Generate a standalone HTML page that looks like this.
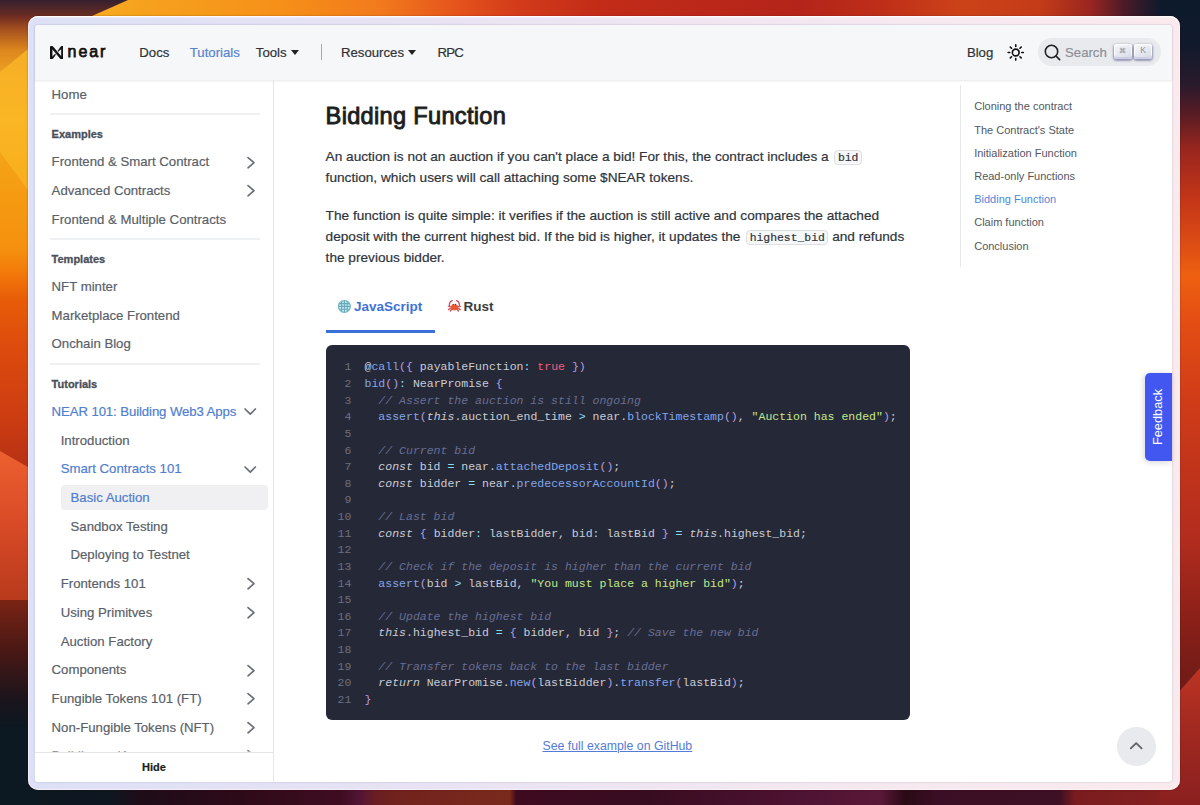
<!DOCTYPE html>
<html><head><meta charset="utf-8"><style>
html,body{margin:0;padding:0;width:1200px;height:805px;overflow:hidden;position:relative;background:#1a1a2a}
.t{position:absolute;white-space:pre;font-family:"Liberation Sans",sans-serif}
.sw{-webkit-text-stroke:0.2px currentColor}
code.ic{font-family:"Liberation Mono",monospace;font-size:11.4px;background:#f6f7f8;border:1px solid #dfe0e5;border-radius:4px;padding:1px 2.5px 0px;margin-left:2px;color:#2f343b;line-height:0}
</style></head><body>
<svg style="position:absolute;left:0;top:0" width="1200" height="805"><defs><linearGradient id="gt" gradientUnits="userSpaceOnUse" x1="0" y1="0" x2="1200" y2="0"><stop offset="0.0000" stop-color="#f6a21e"/><stop offset="0.0833" stop-color="#f8aa22"/><stop offset="0.1167" stop-color="#f6a21e"/><stop offset="0.2333" stop-color="#f69018"/><stop offset="0.3167" stop-color="#f27a1c"/><stop offset="0.3833" stop-color="#e4521c"/><stop offset="0.4333" stop-color="#d23a1a"/><stop offset="0.5000" stop-color="#c22c18"/><stop offset="0.6667" stop-color="#b4241a"/><stop offset="0.7333" stop-color="#be2e18"/><stop offset="0.8000" stop-color="#cc4218"/><stop offset="0.8667" stop-color="#c43c18"/><stop offset="0.9083" stop-color="#9a2620"/><stop offset="0.9375" stop-color="#4a1a28"/><stop offset="0.9667" stop-color="#0e1a2c"/><stop offset="1.0000" stop-color="#0c1a2c"/></linearGradient><linearGradient id="gl" gradientUnits="userSpaceOnUse" x1="0" y1="0" x2="0" y2="805"><stop offset="0.0000" stop-color="#3a2232"/><stop offset="0.0199" stop-color="#6e2c22"/><stop offset="0.0373" stop-color="#a8521e"/><stop offset="0.0621" stop-color="#dc861e"/><stop offset="0.0894" stop-color="#eca020"/><stop offset="0.1863" stop-color="#f3a418"/><stop offset="0.2360" stop-color="#f59c12"/><stop offset="0.3106" stop-color="#f5900e"/><stop offset="0.3379" stop-color="#f27a0a"/><stop offset="0.3727" stop-color="#e85c08"/><stop offset="0.4348" stop-color="#dc4a0e"/><stop offset="0.5217" stop-color="#cc3c12"/><stop offset="0.5839" stop-color="#b43014"/><stop offset="0.6708" stop-color="#a02a14"/><stop offset="0.7453" stop-color="#7a2414"/><stop offset="0.8075" stop-color="#4a1814"/><stop offset="0.8696" stop-color="#1a141c"/><stop offset="0.9068" stop-color="#0c1822"/><stop offset="1.0000" stop-color="#0c1822"/></linearGradient><linearGradient id="gr" gradientUnits="userSpaceOnUse" x1="0" y1="0" x2="0" y2="805"><stop offset="0.0000" stop-color="#0e1a2c"/><stop offset="0.0559" stop-color="#101a2c"/><stop offset="0.1056" stop-color="#2a1a2c"/><stop offset="0.1429" stop-color="#5a1c24"/><stop offset="0.1863" stop-color="#9a261e"/><stop offset="0.2484" stop-color="#c43618"/><stop offset="0.3106" stop-color="#e05014"/><stop offset="0.3416" stop-color="#ee6010"/><stop offset="0.3975" stop-color="#e44e14"/><stop offset="0.4969" stop-color="#d03c18"/><stop offset="0.6708" stop-color="#b22c1e"/><stop offset="0.7702" stop-color="#8a2018"/><stop offset="0.8696" stop-color="#6a1a18"/><stop offset="1.0000" stop-color="#6a1a18"/></linearGradient><linearGradient id="gb" gradientUnits="userSpaceOnUse" x1="0" y1="0" x2="1200" y2="0"><stop offset="0.0000" stop-color="#0c1820"/><stop offset="0.0917" stop-color="#0e1620"/><stop offset="0.1167" stop-color="#1e0c18"/><stop offset="0.2000" stop-color="#2e0a18"/><stop offset="0.2833" stop-color="#3e0c20"/><stop offset="0.3000" stop-color="#521436"/><stop offset="0.3125" stop-color="#6a1e22"/><stop offset="0.3333" stop-color="#72221c"/><stop offset="0.4250" stop-color="#7a2a1c"/><stop offset="0.4300" stop-color="#3e0a20"/><stop offset="0.5417" stop-color="#380c20"/><stop offset="0.6667" stop-color="#4e1232"/><stop offset="0.7333" stop-color="#5a1838"/><stop offset="0.7542" stop-color="#2a0a14"/><stop offset="0.7792" stop-color="#3a0e24"/><stop offset="0.8833" stop-color="#3e1024"/><stop offset="0.8958" stop-color="#7a1c1e"/><stop offset="1.0000" stop-color="#8a2020"/></linearGradient><linearGradient id="gd" x1="0" y1="0" x2="0" y2="1"><stop offset="0" stop-color="#35202e"/><stop offset="1" stop-color="#6e2c22"/></linearGradient></defs><rect x="0" y="0" width="1200" height="17" fill="url(#gt)"/><polygon points="0,0 128,0 92,16 88,17 0,17" fill="url(#gd)"/><rect x="0" y="16" width="40" height="789" fill="url(#gl)"/><rect x="1160" y="16" width="40" height="789" fill="url(#gr)"/><rect x="40" y="775" width="1120" height="30" fill="url(#gb)"/><linearGradient id="gar" x1="0" y1="0" x2="0" y2="1"><stop offset="0" stop-color="#f6ae26"/><stop offset="0.5" stop-color="#fab624"/><stop offset="1" stop-color="#f8ac1c"/></linearGradient><polygon points="0,72 27,50 40,44 40,196 27,189 0,152" fill="url(#gar)"/><linearGradient id="gw1" x1="0" y1="0" x2="0" y2="1"><stop offset="0" stop-color="#ec6030"/><stop offset="0.5" stop-color="#d84a26"/><stop offset="1" stop-color="#b83a1c"/></linearGradient><polygon points="0,451 40,474 40,600 0,600" fill="url(#gw1)"/><linearGradient id="gw2" x1="0" y1="0" x2="0" y2="1"><stop offset="0" stop-color="#bc3424"/><stop offset="0.4" stop-color="#a42a20"/><stop offset="1" stop-color="#8a2020"/></linearGradient><polygon points="1160,713 1200,668 1200,805 1160,805" fill="url(#gw2)"/></svg>
<div style="position:absolute;left:27.5px;top:16px;width:1152.5px;height:774px;border-radius:10px;background:linear-gradient(90deg,#dde0f6 0%,#e6e2f4 30%,#f4e8f0 70%,#faeaee 100%);box-shadow:0 0 1.5px rgba(60,10,0,.6), inset 0 1.5px 0 rgba(255,250,252,.9), inset 0 0 0 1px rgba(255,245,248,.6)"></div>
<div style="position:absolute;left:35px;top:25px;width:1137px;height:757px;border-radius:3px;background:#ffffff;box-shadow:0 0 1.5px rgba(40,40,80,.35)"></div>
<div style="position:absolute;left:35px;top:25px;width:1137px;height:55px;background:#f6f7f9;box-shadow:0 1px 2.5px rgba(20,20,40,.10);border-radius:3px 3px 0 0"></div>
<svg style="position:absolute;left:49.8px;top:45.6px" width="13.5" height="13.5" viewBox="0 0 90 90"><path fill="#111" stroke="#111" stroke-width="4" d="M72.2,4.6L53.4,32.5c-1.3,1.9,1.2,4.2,3,2.6L74.9,19c0.5-0.4,1.2-0.1,1.2,0.6v50.3c0,0.7-0.9,1-1.3,0.5l-56-67C17,1.2,14.4,0,11.7,0H9.7C4.3,0,0,4.3,0,9.7v70.6C0,85.7,4.3,90,9.7,90c3.4,0,6.5-1.7,8.3-4.6l18.8-27.9c1.3-1.9-1.2-4.2-3-2.6L15.3,71c-0.5,0.4-1.2,0.1-1.2-0.6V20.1c0-0.7,0.9-1,1.3-0.5l56,67c1.8,2.2,4.5,3.4,7.3,3.4h2c5.4,0,9.7-4.3,9.7-9.7V9.7c0-5.4-4.3-9.7-9.7-9.7C77.1,0,74,1.7,72.2,4.6z"/></svg>
<div class="t sw" style="left:67.60px;top:40.51px;font-size:16.0px;line-height:21px;color:#111;font-weight:400;font-family:'Liberation Sans';letter-spacing:1.9px;-webkit-text-stroke:0.75px #111">near</div>
<div class="t sw" style="left:139.30px;top:43.54px;font-size:13.2px;line-height:17px;color:#2f3338;font-weight:400;font-family:'Liberation Sans';">Docs</div>
<div class="t sw" style="left:189.80px;top:43.54px;font-size:13.2px;line-height:17px;color:#5585cf;font-weight:400;font-family:'Liberation Sans';">Tutorials</div>
<div class="t sw" style="left:255.80px;top:43.54px;font-size:13.2px;line-height:17px;color:#2f3338;font-weight:400;font-family:'Liberation Sans';">Tools</div>
<div style="position:absolute;left:291px;top:50.3px;width:0;height:0;border-left:4.7px solid transparent;border-right:4.7px solid transparent;border-top:5px solid #222"></div>
<div style="position:absolute;left:320.5px;top:44px;width:1.6px;height:16px;background:#a4a7ac"></div>
<div class="t sw" style="left:341.00px;top:43.54px;font-size:13.2px;line-height:17px;color:#2f3338;font-weight:400;font-family:'Liberation Sans';">Resources</div>
<div style="position:absolute;left:408px;top:50.3px;width:0;height:0;border-left:4.7px solid transparent;border-right:4.7px solid transparent;border-top:5px solid #222"></div>
<div class="t sw" style="left:437.50px;top:43.54px;font-size:13.2px;line-height:17px;color:#2f3338;font-weight:400;font-family:'Liberation Sans';letter-spacing:-0.8px;">RPC</div>
<div class="t sw" style="left:966.90px;top:43.54px;font-size:13.2px;line-height:17px;color:#2f3338;font-weight:400;font-family:'Liberation Sans';">Blog</div>
<svg style="position:absolute;left:1005px;top:42px" width="22" height="22" viewBox="0 0 22 22"><g transform="translate(10.75 10.5)" stroke="#111" stroke-width="1.6" stroke-linecap="round" fill="none"><circle r="3.4"/><path d="M0 -6 V-7.6 M0 6 V7.6 M-6 0 H-7.6 M6 0 H7.6 M4.24 -4.24 L5.4 -5.4 M-4.24 4.24 L-5.4 5.4 M4.24 4.24 L5.4 5.4 M-4.24 -4.24 L-5.4 -5.4"/></g></svg>
<div style="position:absolute;left:1038px;top:38.3px;width:123px;height:27.5px;border-radius:14px;background:#e9eaee"></div>
<svg style="position:absolute;left:1042px;top:43px" width="20" height="20" viewBox="0 0 20 20"><circle cx="9.5" cy="8.5" r="6.2" stroke="#222" stroke-width="1.6" fill="none"/><path d="M14 13 L17.6 16.6" stroke="#222" stroke-width="1.7" stroke-linecap="round"/></svg>
<div class="t sw" style="left:1065.00px;top:43.54px;font-size:13.2px;line-height:17px;color:#8c9099;font-weight:400;font-family:'Liberation Sans';">Search</div>
<div style="position:absolute;left:1114.4px;top:44.1px;width:17.2px;height:15px;box-sizing:border-box;border-radius:3px;background:linear-gradient(-26.5deg,#d5dae4,#f8f8fa);box-shadow:inset 0 -2px 0 0 #cdcde6,inset 0 0 1px 1px #fff,0 1px 2px 1px rgba(30,35,90,.4)"></div>
<div class="t" style="left:1114.4px;top:44.3px;width:17.2px;text-align:center;font-size:7px;line-height:13px;color:#8a8d95">⌘</div>
<div style="position:absolute;left:1134.4px;top:44.1px;width:17.2px;height:15px;box-sizing:border-box;border-radius:3px;background:linear-gradient(-26.5deg,#d5dae4,#f8f8fa);box-shadow:inset 0 -2px 0 0 #cdcde6,inset 0 0 1px 1px #fff,0 1px 2px 1px rgba(30,35,90,.4)"></div>
<div class="t" style="left:1134.4px;top:44.3px;width:17.2px;text-align:center;font-size:8.5px;line-height:13px;color:#8a8d95">K</div>
<div style="position:absolute;left:273.3px;top:80px;width:1.2px;height:702px;background:#e4e5e9"></div>
<div class="t sw" style="left:51.60px;top:85.94px;font-size:13.2px;line-height:17px;color:#5a5f69;font-weight:400;font-family:'Liberation Sans';">Home</div>
<div style="position:absolute;left:49.6px;top:112.6px;width:210.4px;height:2px;background:#eff0f3"></div>
<div class="t" style="left:51.60px;top:127.16px;font-size:11px;line-height:14px;color:#4a4f59;font-weight:700;font-family:'Liberation Sans';-webkit-text-stroke:0.3px #4a4f59">Examples</div>
<div style="position:absolute;left:49.6px;top:237.6px;width:210.4px;height:2px;background:#eff0f3"></div>
<div class="t" style="left:51.60px;top:252.06px;font-size:11px;line-height:14px;color:#4a4f59;font-weight:700;font-family:'Liberation Sans';-webkit-text-stroke:0.3px #4a4f59">Templates</div>
<div style="position:absolute;left:49.6px;top:362.6px;width:210.4px;height:2px;background:#eff0f3"></div>
<div class="t" style="left:51.60px;top:376.86px;font-size:11px;line-height:14px;color:#4a4f59;font-weight:700;font-family:'Liberation Sans';-webkit-text-stroke:0.3px #4a4f59">Tutorials</div>
<div style="position:absolute;left:60.7px;top:485.3px;width:207px;height:24.7px;background:#f0f0f2;border-radius:4px"></div>
<div class="t sw" style="left:51.60px;top:153.24px;font-size:13.2px;line-height:17px;color:#5a5f69;font-weight:400;font-family:'Liberation Sans';">Frontend &amp; Smart Contract</div>
<svg style="position:absolute;left:243px;top:155.5px" width="16" height="16" viewBox="0 0 16 16"><path d="M5 1.6 L11 6.6 L5 11.8" fill="none" stroke="#686d75" stroke-width="1.65" stroke-linecap="round" stroke-linejoin="round"/></svg>
<div class="t sw" style="left:51.60px;top:181.94px;font-size:13.2px;line-height:17px;color:#5a5f69;font-weight:400;font-family:'Liberation Sans';">Advanced Contracts</div>
<svg style="position:absolute;left:243px;top:184.2px" width="16" height="16" viewBox="0 0 16 16"><path d="M5 1.6 L11 6.6 L5 11.8" fill="none" stroke="#686d75" stroke-width="1.65" stroke-linecap="round" stroke-linejoin="round"/></svg>
<div class="t sw" style="left:51.60px;top:210.64px;font-size:13.2px;line-height:17px;color:#5a5f69;font-weight:400;font-family:'Liberation Sans';">Frontend &amp; Multiple Contracts</div>
<div class="t sw" style="left:51.60px;top:278.04px;font-size:13.2px;line-height:17px;color:#5a5f69;font-weight:400;font-family:'Liberation Sans';">NFT minter</div>
<div class="t sw" style="left:51.60px;top:306.74px;font-size:13.2px;line-height:17px;color:#5a5f69;font-weight:400;font-family:'Liberation Sans';">Marketplace Frontend</div>
<div class="t sw" style="left:51.60px;top:335.44px;font-size:13.2px;line-height:17px;color:#5a5f69;font-weight:400;font-family:'Liberation Sans';">Onchain Blog</div>
<div class="t sw" style="left:51.60px;top:402.94px;font-size:13.2px;line-height:17px;color:#4f7ed0;font-weight:400;font-family:'Liberation Sans';letter-spacing:-0.1px;">NEAR 101: Building Web3 Apps</div>
<svg style="position:absolute;left:242px;top:405.2px" width="16" height="16" viewBox="0 0 16 16"><path d="M3 4 L8.3 9.2 L13.4 4" fill="none" stroke="#686d75" stroke-width="1.65" stroke-linecap="round" stroke-linejoin="round"/></svg>
<div class="t sw" style="left:60.70px;top:431.64px;font-size:13.2px;line-height:17px;color:#5a5f69;font-weight:400;font-family:'Liberation Sans';">Introduction</div>
<div class="t sw" style="left:60.70px;top:460.34px;font-size:13.2px;line-height:17px;color:#4f7ed0;font-weight:400;font-family:'Liberation Sans';">Smart Contracts 101</div>
<svg style="position:absolute;left:242px;top:462.6px" width="16" height="16" viewBox="0 0 16 16"><path d="M3 4 L8.3 9.2 L13.4 4" fill="none" stroke="#686d75" stroke-width="1.65" stroke-linecap="round" stroke-linejoin="round"/></svg>
<div class="t sw" style="left:70.50px;top:489.04px;font-size:13.2px;line-height:17px;color:#4f7ed0;font-weight:400;font-family:'Liberation Sans';">Basic Auction</div>
<div class="t sw" style="left:70.50px;top:517.74px;font-size:13.2px;line-height:17px;color:#5a5f69;font-weight:400;font-family:'Liberation Sans';">Sandbox Testing</div>
<div class="t sw" style="left:70.50px;top:546.44px;font-size:13.2px;line-height:17px;color:#5a5f69;font-weight:400;font-family:'Liberation Sans';">Deploying to Testnet</div>
<div class="t sw" style="left:60.70px;top:575.14px;font-size:13.2px;line-height:17px;color:#5a5f69;font-weight:400;font-family:'Liberation Sans';">Frontends 101</div>
<svg style="position:absolute;left:243px;top:577.4px" width="16" height="16" viewBox="0 0 16 16"><path d="M5 1.6 L11 6.6 L5 11.8" fill="none" stroke="#686d75" stroke-width="1.65" stroke-linecap="round" stroke-linejoin="round"/></svg>
<div class="t sw" style="left:60.70px;top:603.84px;font-size:13.2px;line-height:17px;color:#5a5f69;font-weight:400;font-family:'Liberation Sans';">Using Primitves</div>
<svg style="position:absolute;left:243px;top:606.1px" width="16" height="16" viewBox="0 0 16 16"><path d="M5 1.6 L11 6.6 L5 11.8" fill="none" stroke="#686d75" stroke-width="1.65" stroke-linecap="round" stroke-linejoin="round"/></svg>
<div class="t sw" style="left:60.70px;top:632.54px;font-size:13.2px;line-height:17px;color:#5a5f69;font-weight:400;font-family:'Liberation Sans';">Auction Factory</div>
<div class="t sw" style="left:51.60px;top:661.24px;font-size:13.2px;line-height:17px;color:#5a5f69;font-weight:400;font-family:'Liberation Sans';">Components</div>
<svg style="position:absolute;left:243px;top:663.5px" width="16" height="16" viewBox="0 0 16 16"><path d="M5 1.6 L11 6.6 L5 11.8" fill="none" stroke="#686d75" stroke-width="1.65" stroke-linecap="round" stroke-linejoin="round"/></svg>
<div class="t sw" style="left:51.60px;top:689.94px;font-size:13.2px;line-height:17px;color:#5a5f69;font-weight:400;font-family:'Liberation Sans';">Fungible Tokens 101 (FT)</div>
<svg style="position:absolute;left:243px;top:692.2px" width="16" height="16" viewBox="0 0 16 16"><path d="M5 1.6 L11 6.6 L5 11.8" fill="none" stroke="#686d75" stroke-width="1.65" stroke-linecap="round" stroke-linejoin="round"/></svg>
<div class="t sw" style="left:51.60px;top:718.64px;font-size:13.2px;line-height:17px;color:#5a5f69;font-weight:400;font-family:'Liberation Sans';">Non-Fungible Tokens (NFT)</div>
<svg style="position:absolute;left:243px;top:720.9px" width="16" height="16" viewBox="0 0 16 16"><path d="M5 1.6 L11 6.6 L5 11.8" fill="none" stroke="#686d75" stroke-width="1.65" stroke-linecap="round" stroke-linejoin="round"/></svg>
<div class="t sw" style="left:51.60px;top:746.94px;font-size:13.2px;line-height:17px;color:#5a5f69;font-weight:400;font-family:'Liberation Sans';">Building a dApp</div>
<svg style="position:absolute;left:243px;top:749.2px" width="16" height="16" viewBox="0 0 16 16"><path d="M5 1.6 L11 6.6 L5 11.8" fill="none" stroke="#686d75" stroke-width="1.65" stroke-linecap="round" stroke-linejoin="round"/></svg>
<div style="position:absolute;left:35px;top:751.5px;width:238px;height:30.5px;background:#fff;border-top:1px solid #e3e5e8;box-sizing:border-box;border-radius:0 0 0 3px;box-shadow:0 -1px 2px rgba(255,255,255,.5)"></div>
<div class="t" style="left:35.00px;top:759.86px;font-size:11px;line-height:14px;color:#1c1e21;font-weight:700;font-family:'Liberation Sans';width:238px;text-align:center;-webkit-text-stroke:0.2px #1c1e21">Hide</div>
<div class="t sw" style="left:325.60px;top:101.10px;font-size:23.6px;line-height:31px;color:#1c1e21;font-weight:400;font-family:'Liberation Sans';letter-spacing:0.3px;-webkit-text-stroke:0.9px #1c1e21">Bidding Function</div>
<div class="t sw" style="left:325.6px;top:146.29px;width:600px;font-size:13.65px;line-height:21px;color:#2f343b;white-space:normal">An auction is not an auction if you can't place a bid! For this, the contract includes a <code class="ic">bid</code><br>function, which users will call attaching some $NEAR tokens.</div>
<div class="t sw" style="left:325.6px;top:204.59px;width:600px;font-size:13.65px;line-height:21px;color:#2f343b;white-space:normal">The function is quite simple: it verifies if the auction is still active and compares the attached<br>deposit with the current highest bid. If the bid is higher, it updates the <code class="ic">highest_bid</code> and refunds<br>the previous bidder.</div>
<svg style="position:absolute;left:336px;top:298px" width="17" height="17" viewBox="0 0 17 17"><defs><clipPath id="gc"><circle cx="8.4" cy="8.4" r="6.3"/></clipPath></defs><circle cx="8.4" cy="8.4" r="6.4" fill="#c4ecf4"/><g clip-path="url(#gc)" stroke="#6aa8bc" stroke-width="1.1" fill="none"><path d="M5.6 1 V16 M8.4 1 V16 M11.2 1 V16 M1 5.6 H16 M1 8.4 H16 M1 11.2 H16"/></g><circle cx="8.4" cy="8.4" r="5.9" fill="none" stroke="#78b0c2" stroke-width="1.1"/></svg>
<div class="t" style="left:354.00px;top:298.14px;font-size:13.5px;line-height:18px;color:#3d72d8;font-weight:700;font-family:'Liberation Sans';">JavaScript</div>
<svg style="position:absolute;left:446px;top:298px" width="17" height="17" viewBox="0 0 17 17"><g fill="none" stroke="#cc5464" stroke-width="1.4" stroke-linecap="round"><path d="M3.4 7.5 Q3.2 3.8 6.2 2.6"/><path d="M13.4 7.5 Q13.6 3.8 10.6 2.6"/><path d="M4.2 8.6 L2.4 8.4 M4.2 10.4 L2.6 11.6 M5.6 11.4 L4.4 13 M12.6 8.6 L14.4 8.4 M12.6 10.4 L14.2 11.6 M11.2 11.4 L12.4 13"/></g><ellipse cx="8.4" cy="9.4" rx="3.9" ry="2.9" fill="#ee5630"/><circle cx="7.2" cy="6.4" r="0.7" fill="#5a2a2a"/><circle cx="9.6" cy="6.4" r="0.7" fill="#5a2a2a"/></svg>
<div class="t" style="left:463.50px;top:298.14px;font-size:13.5px;line-height:18px;color:#3a3d42;font-weight:700;font-family:'Liberation Sans';">Rust</div>
<div style="position:absolute;left:325.6px;top:330px;width:109.5px;height:2.8px;background:#3b70d6"></div>
<div style="position:absolute;left:325.5px;top:345.3px;width:584px;height:375px;background:#252836;border-radius:6px"></div>
<div class="t" style="left:331.00px;top:359.43px;font-size:11.52px;line-height:15px;color:#6a7082;font-weight:400;font-family:'Liberation Mono';width:20.3px;text-align:right">1</div>
<div class="t" style="left:364.50px;top:359.43px;font-size:11.52px;line-height:15px;color:#c9ccd6;font-weight:400;font-family:'Liberation Mono';"><span style="color:#c9ccd6">@</span><span style="color:#82a6ec">call</span><span style="color:#b89ee0">({</span><span style="color:#c9ccd6"> payableFunction</span><span style="color:#89ddff">:</span><span style="color:#c9ccd6"> </span><span style="color:#ee5f80">true</span><span style="color:#b89ee0"> })</span></div>
<div class="t" style="left:331.00px;top:376.05px;font-size:11.52px;line-height:15px;color:#6a7082;font-weight:400;font-family:'Liberation Mono';width:20.3px;text-align:right">2</div>
<div class="t" style="left:364.50px;top:376.05px;font-size:11.52px;line-height:15px;color:#c9ccd6;font-weight:400;font-family:'Liberation Mono';"><span style="color:#82a6ec">bid</span><span style="color:#b89ee0">()</span><span style="color:#89ddff">:</span><span style="color:#c9ccd6"> NearPromise </span><span style="color:#b89ee0">{</span></div>
<div class="t" style="left:331.00px;top:392.68px;font-size:11.52px;line-height:15px;color:#6a7082;font-weight:400;font-family:'Liberation Mono';width:20.3px;text-align:right">3</div>
<div class="t" style="left:364.50px;top:392.68px;font-size:11.52px;line-height:15px;color:#c9ccd6;font-weight:400;font-family:'Liberation Mono';"><span style="color:#c9ccd6">  </span><span style="color:#676e95;font-style:italic">// Assert the auction is still ongoing</span></div>
<div class="t" style="left:331.00px;top:409.30px;font-size:11.52px;line-height:15px;color:#6a7082;font-weight:400;font-family:'Liberation Mono';width:20.3px;text-align:right">4</div>
<div class="t" style="left:364.50px;top:409.30px;font-size:11.52px;line-height:15px;color:#c9ccd6;font-weight:400;font-family:'Liberation Mono';"><span style="color:#c9ccd6">  </span><span style="color:#82a6ec">assert</span><span style="color:#b89ee0">(</span><span style="color:#c9ccd6;font-style:italic">this</span><span style="color:#c9ccd6">.auction_end_time </span><span style="color:#89ddff">&gt;</span><span style="color:#c9ccd6"> near.</span><span style="color:#82a6ec">blockTimestamp</span><span style="color:#b89ee0">()</span><span style="color:#c9ccd6">, </span><span style="color:#c3e88d">&quot;Auction has ended&quot;</span><span style="color:#b89ee0">)</span><span style="color:#c9ccd6">;</span></div>
<div class="t" style="left:331.00px;top:425.93px;font-size:11.52px;line-height:15px;color:#6a7082;font-weight:400;font-family:'Liberation Mono';width:20.3px;text-align:right">5</div>
<div class="t" style="left:331.00px;top:442.55px;font-size:11.52px;line-height:15px;color:#6a7082;font-weight:400;font-family:'Liberation Mono';width:20.3px;text-align:right">6</div>
<div class="t" style="left:364.50px;top:442.55px;font-size:11.52px;line-height:15px;color:#c9ccd6;font-weight:400;font-family:'Liberation Mono';"><span style="color:#c9ccd6">  </span><span style="color:#676e95;font-style:italic">// Current bid</span></div>
<div class="t" style="left:331.00px;top:459.18px;font-size:11.52px;line-height:15px;color:#6a7082;font-weight:400;font-family:'Liberation Mono';width:20.3px;text-align:right">7</div>
<div class="t" style="left:364.50px;top:459.18px;font-size:11.52px;line-height:15px;color:#c9ccd6;font-weight:400;font-family:'Liberation Mono';"><span style="color:#c9ccd6">  </span><span style="color:#c9ccd6;font-style:italic">const</span><span style="color:#c9ccd6"> bid </span><span style="color:#89ddff">=</span><span style="color:#c9ccd6"> near.</span><span style="color:#82a6ec">attachedDeposit</span><span style="color:#b89ee0">()</span><span style="color:#c9ccd6">;</span></div>
<div class="t" style="left:331.00px;top:475.80px;font-size:11.52px;line-height:15px;color:#6a7082;font-weight:400;font-family:'Liberation Mono';width:20.3px;text-align:right">8</div>
<div class="t" style="left:364.50px;top:475.80px;font-size:11.52px;line-height:15px;color:#c9ccd6;font-weight:400;font-family:'Liberation Mono';"><span style="color:#c9ccd6">  </span><span style="color:#c9ccd6;font-style:italic">const</span><span style="color:#c9ccd6"> bidder </span><span style="color:#89ddff">=</span><span style="color:#c9ccd6"> near.</span><span style="color:#82a6ec">predecessorAccountId</span><span style="color:#b89ee0">()</span><span style="color:#c9ccd6">;</span></div>
<div class="t" style="left:331.00px;top:492.43px;font-size:11.52px;line-height:15px;color:#6a7082;font-weight:400;font-family:'Liberation Mono';width:20.3px;text-align:right">9</div>
<div class="t" style="left:331.00px;top:509.05px;font-size:11.52px;line-height:15px;color:#6a7082;font-weight:400;font-family:'Liberation Mono';width:20.3px;text-align:right">10</div>
<div class="t" style="left:364.50px;top:509.05px;font-size:11.52px;line-height:15px;color:#c9ccd6;font-weight:400;font-family:'Liberation Mono';"><span style="color:#c9ccd6">  </span><span style="color:#676e95;font-style:italic">// Last bid</span></div>
<div class="t" style="left:331.00px;top:525.68px;font-size:11.52px;line-height:15px;color:#6a7082;font-weight:400;font-family:'Liberation Mono';width:20.3px;text-align:right">11</div>
<div class="t" style="left:364.50px;top:525.68px;font-size:11.52px;line-height:15px;color:#c9ccd6;font-weight:400;font-family:'Liberation Mono';"><span style="color:#c9ccd6">  </span><span style="color:#c9ccd6;font-style:italic">const</span><span style="color:#c9ccd6"> </span><span style="color:#b89ee0">{</span><span style="color:#c9ccd6"> bidder</span><span style="color:#89ddff">:</span><span style="color:#c9ccd6"> lastBidder, bid</span><span style="color:#89ddff">:</span><span style="color:#c9ccd6"> lastBid </span><span style="color:#b89ee0">}</span><span style="color:#c9ccd6"> </span><span style="color:#89ddff">=</span><span style="color:#c9ccd6"> </span><span style="color:#c9ccd6;font-style:italic">this</span><span style="color:#c9ccd6">.highest_bid;</span></div>
<div class="t" style="left:331.00px;top:542.30px;font-size:11.52px;line-height:15px;color:#6a7082;font-weight:400;font-family:'Liberation Mono';width:20.3px;text-align:right">12</div>
<div class="t" style="left:331.00px;top:558.93px;font-size:11.52px;line-height:15px;color:#6a7082;font-weight:400;font-family:'Liberation Mono';width:20.3px;text-align:right">13</div>
<div class="t" style="left:364.50px;top:558.93px;font-size:11.52px;line-height:15px;color:#c9ccd6;font-weight:400;font-family:'Liberation Mono';"><span style="color:#c9ccd6">  </span><span style="color:#676e95;font-style:italic">// Check if the deposit is higher than the current bid</span></div>
<div class="t" style="left:331.00px;top:575.55px;font-size:11.52px;line-height:15px;color:#6a7082;font-weight:400;font-family:'Liberation Mono';width:20.3px;text-align:right">14</div>
<div class="t" style="left:364.50px;top:575.55px;font-size:11.52px;line-height:15px;color:#c9ccd6;font-weight:400;font-family:'Liberation Mono';"><span style="color:#c9ccd6">  </span><span style="color:#82a6ec">assert</span><span style="color:#b89ee0">(</span><span style="color:#c9ccd6">bid </span><span style="color:#89ddff">&gt;</span><span style="color:#c9ccd6"> lastBid, </span><span style="color:#c3e88d">&quot;You must place a higher bid&quot;</span><span style="color:#b89ee0">)</span><span style="color:#c9ccd6">;</span></div>
<div class="t" style="left:331.00px;top:592.18px;font-size:11.52px;line-height:15px;color:#6a7082;font-weight:400;font-family:'Liberation Mono';width:20.3px;text-align:right">15</div>
<div class="t" style="left:331.00px;top:608.80px;font-size:11.52px;line-height:15px;color:#6a7082;font-weight:400;font-family:'Liberation Mono';width:20.3px;text-align:right">16</div>
<div class="t" style="left:364.50px;top:608.80px;font-size:11.52px;line-height:15px;color:#c9ccd6;font-weight:400;font-family:'Liberation Mono';"><span style="color:#c9ccd6">  </span><span style="color:#676e95;font-style:italic">// Update the highest bid</span></div>
<div class="t" style="left:331.00px;top:625.43px;font-size:11.52px;line-height:15px;color:#6a7082;font-weight:400;font-family:'Liberation Mono';width:20.3px;text-align:right">17</div>
<div class="t" style="left:364.50px;top:625.43px;font-size:11.52px;line-height:15px;color:#c9ccd6;font-weight:400;font-family:'Liberation Mono';"><span style="color:#c9ccd6">  </span><span style="color:#c9ccd6;font-style:italic">this</span><span style="color:#c9ccd6">.highest_bid </span><span style="color:#89ddff">=</span><span style="color:#c9ccd6"> </span><span style="color:#b89ee0">{</span><span style="color:#c9ccd6"> bidder, bid </span><span style="color:#b89ee0">}</span><span style="color:#c9ccd6">; </span><span style="color:#676e95;font-style:italic">// Save the new bid</span></div>
<div class="t" style="left:331.00px;top:642.05px;font-size:11.52px;line-height:15px;color:#6a7082;font-weight:400;font-family:'Liberation Mono';width:20.3px;text-align:right">18</div>
<div class="t" style="left:331.00px;top:658.68px;font-size:11.52px;line-height:15px;color:#6a7082;font-weight:400;font-family:'Liberation Mono';width:20.3px;text-align:right">19</div>
<div class="t" style="left:364.50px;top:658.68px;font-size:11.52px;line-height:15px;color:#c9ccd6;font-weight:400;font-family:'Liberation Mono';"><span style="color:#c9ccd6">  </span><span style="color:#676e95;font-style:italic">// Transfer tokens back to the last bidder</span></div>
<div class="t" style="left:331.00px;top:675.30px;font-size:11.52px;line-height:15px;color:#6a7082;font-weight:400;font-family:'Liberation Mono';width:20.3px;text-align:right">20</div>
<div class="t" style="left:364.50px;top:675.30px;font-size:11.52px;line-height:15px;color:#c9ccd6;font-weight:400;font-family:'Liberation Mono';"><span style="color:#c9ccd6">  </span><span style="color:#c9ccd6;font-style:italic">return</span><span style="color:#c9ccd6"> NearPromise.</span><span style="color:#82a6ec">new</span><span style="color:#b89ee0">(</span><span style="color:#c9ccd6">lastBidder</span><span style="color:#b89ee0">)</span><span style="color:#c9ccd6">.</span><span style="color:#82a6ec">transfer</span><span style="color:#b89ee0">(</span><span style="color:#c9ccd6">lastBid</span><span style="color:#b89ee0">)</span><span style="color:#c9ccd6">;</span></div>
<div class="t" style="left:331.00px;top:691.93px;font-size:11.52px;line-height:15px;color:#6a7082;font-weight:400;font-family:'Liberation Mono';width:20.3px;text-align:right">21</div>
<div class="t" style="left:364.50px;top:691.93px;font-size:11.52px;line-height:15px;color:#c9ccd6;font-weight:400;font-family:'Liberation Mono';"><span style="color:#b89ee0">}</span></div>
<div class="t" style="left:542.50px;top:738.13px;font-size:12.3px;line-height:16px;color:#557bd6;font-weight:400;font-family:'Liberation Sans';text-decoration:underline;text-underline-offset:1px;text-decoration-thickness:1px">See full example on GitHub</div>
<div style="position:absolute;left:960px;top:85px;width:1.2px;height:182px;background:#e6e7ea"></div>
<div class="t" style="left:974.20px;top:99.46px;font-size:11px;line-height:14px;color:#525760;font-weight:400;font-family:'Liberation Sans';">Cloning the contract</div>
<div class="t" style="left:974.20px;top:122.66px;font-size:11px;line-height:14px;color:#525760;font-weight:400;font-family:'Liberation Sans';">The Contract&#x27;s State</div>
<div class="t" style="left:974.20px;top:145.86px;font-size:11px;line-height:14px;color:#525760;font-weight:400;font-family:'Liberation Sans';">Initialization Function</div>
<div class="t" style="left:974.20px;top:169.06px;font-size:11px;line-height:14px;color:#525760;font-weight:400;font-family:'Liberation Sans';">Read-only Functions</div>
<div class="t" style="left:974.20px;top:192.26px;font-size:11px;line-height:14px;color:#4f86dc;font-weight:400;font-family:'Liberation Sans';">Bidding Function</div>
<div class="t" style="left:974.20px;top:215.46px;font-size:11px;line-height:14px;color:#525760;font-weight:400;font-family:'Liberation Sans';">Claim function</div>
<div class="t" style="left:974.20px;top:238.66px;font-size:11px;line-height:14px;color:#525760;font-weight:400;font-family:'Liberation Sans';">Conclusion</div>
<div style="position:absolute;left:1144.8px;top:372.6px;width:27px;height:88px;background:#4257f0;border-radius:5px 0 0 5px;box-shadow:-1px 1px 6px rgba(0,0,0,.18)"></div>
<div class="t" style="left:1158.3px;top:416.5px;width:0;height:0"><div style="position:absolute;left:-40px;top:-8px;width:80px;line-height:16px;text-align:center;font-size:12.8px;color:#fff;transform:rotate(-90deg)">Feedback</div></div>
<div style="position:absolute;left:1117px;top:727px;width:38.5px;height:38.5px;border-radius:50%;background:#e9eaed"></div>
<svg style="position:absolute;left:1126px;top:736px" width="20" height="20" viewBox="0 0 20 20"><path d="M4.8 12.4 L10.2 7.1 L15.6 12.4" fill="none" stroke="#5f6368" stroke-width="1.8" stroke-linecap="round" stroke-linejoin="round"/></svg>
</body></html>
